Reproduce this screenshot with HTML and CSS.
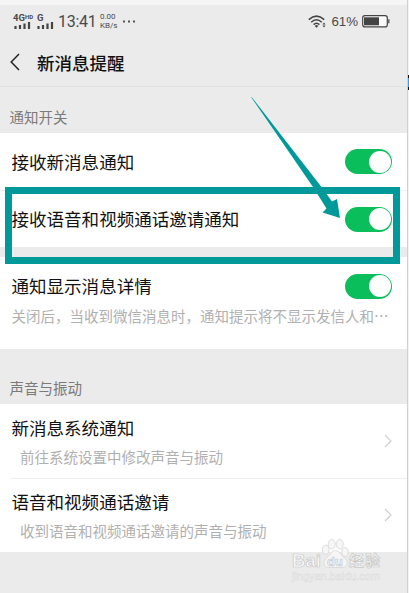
FILE: index.html
```html
<!DOCTYPE html>
<html lang="zh">
<head>
  <meta charset="UTF-8">
  <title>新消息提醒</title>
  <link rel="stylesheet" href="styles.css">
</head>
<body>
  <div id="wrapper">
    <div class="phone">
      <div class="status-bar">
        <div class="signal">
          <span class="net">4G<sup>HD</sup></span>
          <svg width="17" height="7" viewBox="0 0 17 7"><path d="M1.500 4v3M6 3v4M10.500 1.500v5.500M15 0v7" stroke="#444" stroke-width="2.200"/></svg>
        </div>
        <div class="signal signal-g">
          <span class="net">G</span>
          <svg width="17" height="7" viewBox="0 0 17 7"><path d="M1.500 4v3M6 3v4M10.500 1.500v5.500M15 0v7" stroke="#444" stroke-width="2.200"/></svg>
        </div>
        <span class="time">13:41</span>
        <div class="speed"><span>0.00</span><span>KB/s</span></div>
        <svg class="more" width="13" height="3" viewBox="0 0 13 3"><path d="M0 .5h2v2H0zM5 .5h2v2H5zM10 .5h2v2h-2z" fill="#555"/></svg>
        <svg class="wifi" width="18" height="13" viewBox="0 0 18 13">
          <path d="M.8 4.6Q8.5-2.4 16.2 4.6M3.2 7.2Q8.5 2.2 13.8 7.2M5.6 9.6Q8.5 6.8 11.4 9.6" fill="none" stroke="#444" stroke-width="1.5"/>
          <path d="M6.800 11a2.200 2.200 0 0 1 3.400 0L8.500 12.800z" fill="#444"/>
          <path d="M14.500 9.500l1.500-2 1.500 2zM14.500 10.500l1.500 2 1.500-2z" fill="#444"/>
        </svg>
        <span class="percent">61%</span>
        <svg class="battery" width="28" height="13" viewBox="0 0 28 13">
          <rect x=".7" y=".7" width="24.600" height="11.200" rx="2.200" fill="#fafafa" stroke="#444" stroke-width="1.200"/>
          <path d="M2 2.300h15v8H2z" fill="#444"/>
          <path d="M26.800 4.300v4" stroke="#666" stroke-width="1.500"/>
        </svg>
      </div>

      <header>
        <svg width="10" height="18" viewBox="0 0 10 18"><path d="M9 1L1.200 9 9 17" fill="none" stroke="#222" stroke-width="1.500"/></svg>
        <h1>新消息提醒</h1>
      </header>

      <h2 class="section">通知开关</h2>
      <div class="row row-switch">
        <span class="label">接收新消息通知</span>
        <span class="switch"></span>
      </div>
      <div class="row row-switch">
        <span class="label">接收语音和视频通话邀请通知</span>
        <span class="switch"></span>
      </div>

      <div class="row row-detail">
        <div class="detail-top">
          <span class="label">通知显示消息详情</span>
          <span class="switch"></span>
        </div>
        <p class="desc">关闭后，当收到微信消息时，通知提示将不显示发信人和<span class="dots">⋯</span></p>
      </div>

      <h2 class="section section-sound">声音与振动</h2>
      <div class="row row-link">
        <div class="texts">
          <span class="label">新消息系统通知</span>
          <p class="desc">前往系统设置中修改声音与振动</p>
        </div>
        <svg class="arrow" width="8" height="14" viewBox="0 0 8 14"><path d="M1 1l6 6-6 6" fill="none" stroke="#d0d0d0" stroke-width="1.200"/></svg>
      </div>
      <div class="row row-link">
        <div class="texts">
          <span class="label">语音和视频通话邀请</span>
          <p class="desc">收到语音和视频通话邀请的声音与振动</p>
        </div>
        <svg class="arrow" width="8" height="14" viewBox="0 0 8 14"><path d="M1 1l6 6-6 6" fill="none" stroke="#d0d0d0" stroke-width="1.200"/></svg>
      </div>
    </div>
    <div class="edge"><span class="edge-mark"></span></div>

    <!-- highlight frame and pointer -->
    <div class="frame"></div>
    <svg class="pointer" width="90" height="122" viewBox="0 0 90 122"><path d="M0 0L1 .5 70.500 90 81 104.500 86 102 89 121 71.500 115.500 75.500 111.500 62 90z" fill="#009999"/></svg>

    <!-- watermark -->
    <svg class="watermark" width="100" height="54" viewBox="0 0 100 54">
      <g class="paw">
        <ellipse cx="35.700" cy="11.700" rx="3.300" ry="4.500"/>
        <ellipse cx="41.700" cy="6.200" rx="3.500" ry="4.800"/>
        <ellipse cx="49.700" cy="6.200" rx="3.500" ry="4.800"/>
        <ellipse cx="55" cy="14" rx="3.200" ry="4.400"/>
        <path d="M45.500 12.500c-4 0-5 4.500-9 7.500s-3 9.500 2 9.500h14c6 0 6-6.500 2-9.500s-5-7.500-9-7.500z"/>
      </g>
      <g class="mark">
        <text x="2" y="28.500" font-size="18.500" textLength="29" lengthAdjust="spacingAndGlyphs">Bai</text>
        <text x="37" y="28" font-size="13" textLength="16">du</text>
        <text x="59" y="27.500" font-size="15" textLength="31">经验</text>
      </g>
      <text class="site" x="2" y="42" font-size="10" textLength="88" lengthAdjust="spacingAndGlyphs">jingyan.baidu.com</text>
    </svg>
  </div>
</body>
</html>
```
FILE: styles.css
```css
* { margin: 0; padding: 0; box-sizing: border-box; }
#wrapper {
  position: relative;
  display: flex;
  width: 409px;
  height: 593px;
  overflow: hidden;
  background: #ebebeb;
  font-family: "Noto Sans CJK SC", sans-serif;
}
svg { display: block; flex-shrink: 0; }
.phone {
  width: 407px;
  border-top: 5px solid #f5f5f5;
}
.status-bar {
  display: flex;
  align-items: center;
  height: 35px;
  padding: 0 17px 3px 13px;
  color: #4a4a4a;
  font-family: Roboto, sans-serif;
}
.signal { width: 20px; }
.signal svg { margin-left: 1px; }
.signal-g { width: 17px; margin-left: 4px; }
.signal-g svg { margin-left: 0; }
.net {
  display: block;
  height: 8px;
  line-height: 8px;
  font-size: 9.5px;
  font-weight: bold;
  white-space: nowrap;
}
.net sup {
  font-size: 6px;
  line-height: 0;
  vertical-align: 2.5px;
}
.time {
  width: 37px;
  margin-left: 4px;
  font-size: 16px;
  letter-spacing: -.3px;
}
.speed {
  display: flex;
  flex-direction: column;
  width: 18px;
  margin-left: 5px;
  font-size: 8px;
  line-height: 9px;
}
.more { margin-left: 5px; }
.wifi { margin-left: auto; }
.percent {
  margin-left: 5px;
  font-family: "Liberation Sans", sans-serif;
  font-size: 13.3px;
}
.battery { margin-left: 4px; }

header {
  display: flex;
  align-items: center;
  height: 47px;
  padding: 0 0 2px 10px;
  border-bottom: 1px solid #e2e2e2;
}
header h1 {
  margin-left: 17px;
  font-size: 17.5px;
  font-weight: 500;
  color: #111;
}
.section {
  height: 46px;
  padding: 15px 0 0 9.5px;
  font-size: 14.5px;
  line-height: 29px;
  font-weight: normal;
  color: #7a7a7a;
}
.section-sound { height: 55px; padding-top: 24px; }

.row { background: #fff; }
.row-switch {
  display: flex;
  align-items: center;
  justify-content: space-between;
  height: 57px;
  padding: 0 15px 0 11.5px;
}
.row-switch + .row-switch { border-top: 1px solid #eee; }
.label {
  font-size: 17.55px;
  line-height: 26px;
  color: #111;
}
.switch {
  width: 47px;
  height: 25px;
  padding: 1.5px;
  border-radius: 13px;
  background: #0abf5b;
}
.switch::after {
  content: "";
  display: block;
  width: 22px;
  height: 22px;
  margin-left: auto;
  border-radius: 50%;
  background: #fff;
}
.row-detail {
  height: 92px;
  margin-top: 10px;
  padding: 16px 15px 0 11.5px;
}
.detail-top {
  display: flex;
  align-items: center;
  justify-content: space-between;
}
.desc {
  font-size: 14.5px;
  line-height: 22px;
  color: #b0b0b0;
  white-space: nowrap;
}
.row-detail .desc { margin-top: 6px; }

.row-link {
  display: flex;
  align-items: center;
  justify-content: space-between;
  height: 74px;
  padding: 0 15px 0 11.5px;
}
.row-link + .row-link {
  background: linear-gradient(#eee, #eee) 11px 0 / 100% 1px no-repeat #fff;
}
.texts .label { display: block; }
.texts .desc { margin: 5px 0 0 8.5px; }

.edge {
  width: 2px;
  border-left: 1px solid #d0d0d0;
  background: #f3f3f3;
}
.edge-mark {
  display: block;
  height: 15px;
  margin-top: 75px;
  border: solid #111;
  border-width: 3px 0;
  background: #3a9be8;
}

.frame {
  position: absolute;
  left: 5px;
  top: 187px;
  width: 395px;
  height: 77px;
  border: 7px solid #099;
}
.pointer { position: absolute; left: 251px; top: 97px; }
.watermark { position: absolute; left: 290px; top: 538px; }
.paw {
  fill: #f6f6f6;
  stroke: #d6d6d6;
  stroke-width: .8px;
}
.mark {
  font-family: "Liberation Sans", "Noto Sans CJK SC", sans-serif;
  font-weight: bold;
  fill: #f8f8f8;
  stroke: #c8c8c8;
  stroke-width: .7px;
}
.site {
  font-family: "Liberation Sans", sans-serif;
  fill: #f4f4f4;
  stroke: #d8d8d8;
  stroke-width: .4px;
}
```
